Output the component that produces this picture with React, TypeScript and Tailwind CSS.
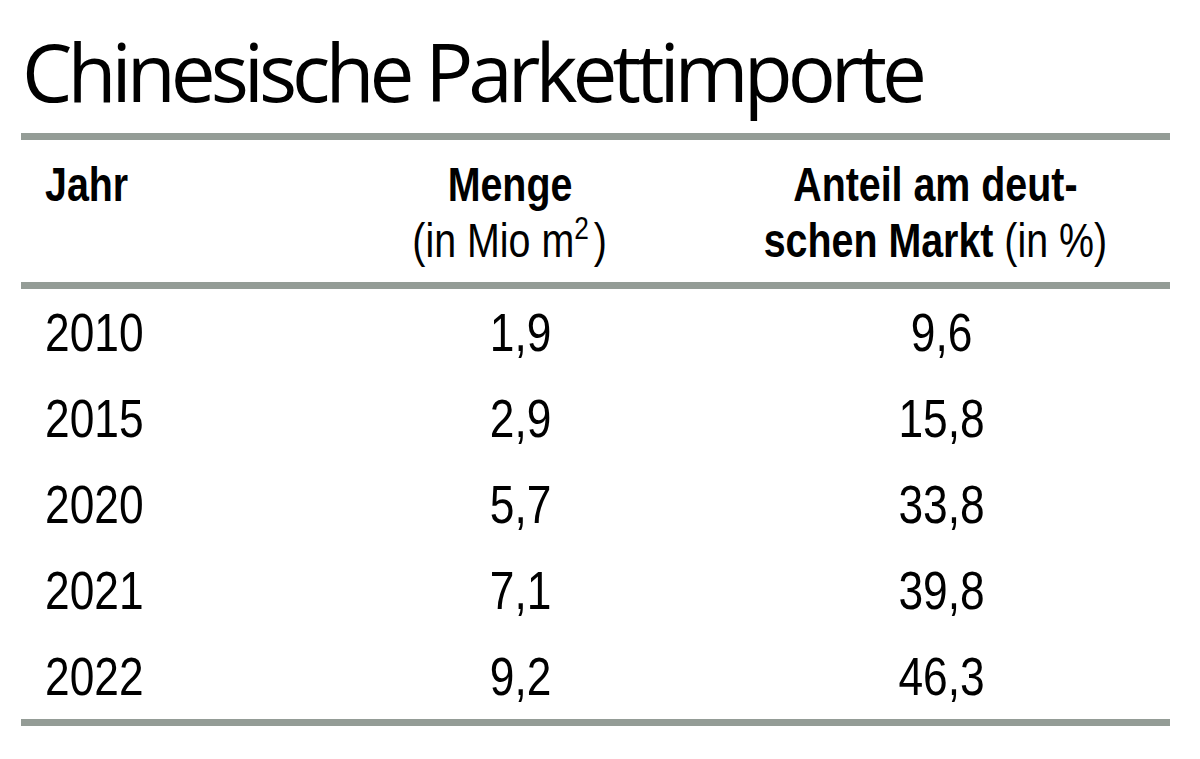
import React from "react";

const rows = [
  ["2010", "1,9", "9,6"],
  ["2015", "2,9", "15,8"],
  ["2020", "5,7", "33,8"],
  ["2021", "7,1", "39,8"],
  ["2022", "9,2", "46,3"],
];

const sans = "font-['Liberation_Sans',Arial,sans-serif]";

function Rule() {
  return <div className="h-[7px] w-full bg-[#949c96]" />;
}

function Narrow({ children, left }: { children: React.ReactNode; left?: boolean }) {
  return (
    <div className={`flex ${left ? "justify-start" : "justify-center"}`}>
      <span
        className={`inline-block shrink-0 whitespace-nowrap scale-x-[0.82] ${left ? "origin-left" : "origin-center"}`}
      >
        {children}
      </span>
    </div>
  );
}

export default function App() {
  return (
    <div className="w-[1200px] h-[759px] bg-white text-black overflow-hidden">
      <div className="ml-[21px] w-[1149px]">
        <h1 className="pt-[31px] mb-[22px] pl-[1px] text-[80px] leading-[80px] font-['Open_Sans',sans-serif] font-normal tracking-[-5px] whitespace-nowrap">
          Chinesische Parkettimporte
        </h1>
        <Rule />
        <div className={`grid grid-cols-[279px_420px_430px] pt-[17px] pb-[13px] text-[48px] leading-[56px] ${sans}`}>
          <div className="pl-[24px] font-bold">
            <Narrow left>Jahr</Narrow>
          </div>
          <div>
            <Narrow>
              <span className="font-bold">Menge</span>
            </Narrow>
            <Narrow>
              <span className="font-normal">
                (in Mio m
                <span className="inline-block text-[32px] leading-none relative -top-[18px]">2</span>
                <span className="ml-[6px]">)</span>
              </span>
            </Narrow>
          </div>
          <div>
            <Narrow>
              <span className="font-bold">Anteil am deut-</span>
            </Narrow>
            <Narrow>
              <span className="font-bold">schen Markt</span> <span className="font-normal">(in %)</span>
            </Narrow>
          </div>
        </div>
        <Rule />
        <div className={`text-[54px] leading-[86px] ${sans}`}>
          {rows.map((r) => (
            <div key={r[0]} className="grid grid-cols-[279px_420px_430px]">
              <div className="pl-[24px]">
                <Narrow left>{r[0]}</Narrow>
              </div>
              <div className="pl-[22px]">
                <Narrow>{r[1]}</Narrow>
              </div>
              <div className="pl-[14px]">
                <Narrow>{r[2]}</Narrow>
              </div>
            </div>
          ))}
        </div>
        <Rule />
      </div>
    </div>
  );
}
